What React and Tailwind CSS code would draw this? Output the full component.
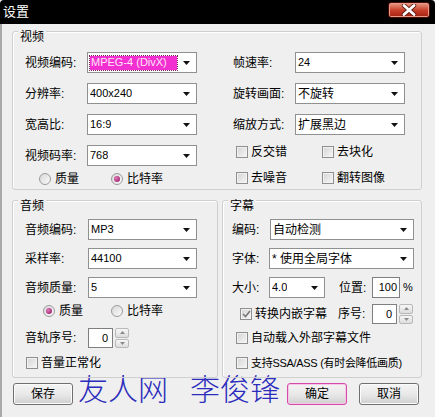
import React from 'react';

function DownArrow() {
  return (
    <svg width="7" height="4" viewBox="0 0 7 4" className="shrink-0">
      <path d="M0 0h7L3.5 4z" fill="#111" />
    </svg>
  );
}

function Combo({ value, className = '', textClass = 'text-[12px]', highlight = false }) {
  return (
    <div className={`flex h-[21px] shrink-0 items-center justify-between border border-[#8f9090] bg-white pl-[2px] pr-[6px] ${className}`}>
      {highlight ? (
        <span className="flex h-[14px] w-[87px] items-center bg-[#f22fd0] pl-[1px] text-[11px] text-[#ffe4f8] outline-1 outline-dotted outline-[#7a2060]">
          {value}
        </span>
      ) : (
        <span className={`truncate ${textClass}`}>{value}</span>
      )}
      <DownArrow />
    </div>
  );
}

function Check({ checked = false }) {
  return (
    <span className="flex h-[12px] w-[12px] shrink-0 items-center justify-center border border-[#8f8f8f] bg-linear-to-br from-[#d4d4d4] to-[#f7f7f7] shadow-[inset_0_0_0_1px_#f2f2f2]">
      {checked && (
        <svg width="9" height="8" viewBox="0 0 9 8">
          <path d="M1 4l2.5 2.5L8 1" stroke="#7c7c7c" strokeWidth="1.7" fill="none" />
        </svg>
      )}
    </span>
  );
}

function CheckItem({ label, checked, className = '', textClass = '' }) {
  return (
    <div className={`flex h-[14px] items-center gap-[3px] whitespace-nowrap ${className}`}>
      <Check checked={checked} />
      <span className={textClass}>{label}</span>
    </div>
  );
}

function Radio({ label, checked, className = '' }) {
  return (
    <div className={`flex h-[14px] items-center gap-[4px] ${className}`}>
      <span className="flex h-[12px] w-[12px] shrink-0 items-center justify-center rounded-full border border-[#9a9a9a] bg-linear-to-br from-[#d8d8d8] to-[#fbfbfb]">
        {checked && (
          <span className="h-[6px] w-[6px] rounded-full bg-[radial-gradient(circle_at_35%_35%,#e27ab8,#8c0f5e)]" />
        )}
      </span>
      <span>{label}</span>
    </div>
  );
}

function SpinBtn({ up }) {
  return (
    <span className="flex flex-1 items-center justify-center rounded-[2px] border border-[#b9b9b9] bg-linear-to-b from-[#f7f7f7] to-[#dcdcdc]">
      <svg width="5" height="3" viewBox="0 0 5 3">
        <path d={up ? 'M0 3h5L2.5 0z' : 'M0 0h5L2.5 3z'} fill="#8a8a8a" />
      </svg>
    </span>
  );
}

function Spin({ value }) {
  return (
    <div className="flex h-[20px] items-stretch gap-[2px]">
      <div className="flex w-[25px] items-center justify-end border border-[#7f7f7f] bg-white pr-[4px] text-[11px]">
        {value}
      </div>
      <div className="flex w-[14px] flex-col gap-[1px]">
        <SpinBtn up />
        <SpinBtn />
      </div>
    </div>
  );
}

function Group({ title, className = '', children }) {
  return (
    <div className={`relative shrink-0 rounded-[3px] border border-[#cfcfcf] shadow-[inset_1px_1px_0_#ffffff] ${className}`}>
      <span className="absolute -top-[2px] left-[5px] bg-[#efefef] px-[2px] leading-[14px]">{title}</span>
      {children}
    </div>
  );
}

function Btn({ children, focus = false }) {
  return (
    <button
      className={`h-[22px] w-[60px] shrink-0 rounded-[3px] border bg-linear-to-b from-[#f4f4f4] via-[#e9e9e9] to-[#d0d0d0] text-[12px] ${
        focus ? 'border-[#d64aa8] shadow-[inset_0_0_0_1px_#f6c6e6]' : 'border-[#707070] shadow-[inset_0_0_0_1px_#fbfbfb]'
      }`}
    >
      {children}
    </button>
  );
}

export default function App() {
  return (
    <div className="flex h-[417px] w-[435px] flex-col overflow-hidden bg-[#efefef] font-['Liberation_Sans','Noto_Sans_CJK_SC',sans-serif] text-[12px] text-black">
      {/* title bar */}
      <div className="flex h-[24px] shrink-0 items-start justify-between rounded-t-[4px] bg-black pl-[3px] pr-[5px]">
        <span className="mt-[4px] text-[13px] leading-[16px] text-white">设置</span>
        <div className="mt-[2px] flex h-[16px] w-[42px] items-center justify-center rounded-[3px] border border-[#4a0e08] bg-linear-to-b from-[#e59b88] via-[#c9412c] to-[#a3200f] shadow-[inset_0_0_0_1px_#eb9a8a]">
          <svg width="16" height="12" viewBox="0 0 16 12">
            <path d="M3 1.5l10 9M13 1.5l-10 9" stroke="#5a1a10" strokeWidth="4.4" strokeLinecap="round" />
            <path d="M3 1.5l10 9M13 1.5l-10 9" stroke="#ffffff" strokeWidth="2.8" strokeLinecap="round" />
          </svg>
        </div>
      </div>

      <div className="flex flex-1 flex-col border-l-2 border-[#a9a9a9] pl-[10px]">
        {/* video */}
        <Group title="视频" className="mt-[7px] h-[159px] w-[410px]">
          <div className="flex pl-[12px] pt-[20px]">
            <div className="flex w-[172px] flex-col">
              <div className="flex flex-col gap-[10px]">
                <div className="flex items-center">
                  <span className="w-[62px]">视频编码:</span>
                  <Combo value="MPEG-4 (DivX)" highlight className="w-[110px]" />
                </div>
                <div className="flex items-center">
                  <span className="w-[62px]">分辨率:</span>
                  <Combo value="400x240" textClass="text-[11px]" className="w-[110px]" />
                </div>
                <div className="flex items-center">
                  <span className="w-[62px]">宽高比:</span>
                  <Combo value="16:9" textClass="text-[11px]" className="w-[110px]" />
                </div>
                <div className="flex items-center">
                  <span className="w-[62px]">视频码率:</span>
                  <Combo value="768" textClass="text-[11px]" className="w-[110px]" />
                </div>
              </div>
              <div className="ml-[14px] mt-[6px] flex">
                <Radio label="质量" className="w-[72px]" />
                <Radio label="比特率" checked />
              </div>
            </div>

            <div className="ml-[36px] flex w-[172px] flex-col">
              <div className="flex flex-col gap-[10px]">
                <div className="flex items-center">
                  <span className="w-[62px]">帧速率:</span>
                  <Combo value="24" textClass="text-[11px]" className="w-[110px]" />
                </div>
                <div className="flex items-center">
                  <span className="w-[62px]">旋转画面:</span>
                  <Combo value="不旋转" className="w-[110px]" />
                </div>
                <div className="flex items-center">
                  <span className="w-[62px]">缩放方式:</span>
                  <Combo value="扩展黑边" className="w-[110px]" />
                </div>
              </div>
              <div className="ml-[3px] mt-[10px] flex">
                <CheckItem label="反交错" className="w-[86px]" />
                <CheckItem label="去块化" />
              </div>
              <div className="ml-[3px] mt-[12px] flex">
                <CheckItem label="去噪音" className="w-[86px]" />
                <CheckItem label="翻转图像" />
              </div>
            </div>
          </div>
        </Group>

        <div className="mt-[10px] flex gap-[4px]">
          {/* audio */}
          <Group title="音频" className="h-[178px] w-[206px]">
            <div className="flex flex-col pl-[12px] pt-[18px]">
              <div className="flex flex-col gap-[8px]">
                <div className="flex items-center">
                  <span className="w-[63px]">音频编码:</span>
                  <Combo value="MP3" textClass="text-[11px]" className="w-[109px]" />
                </div>
                <div className="flex items-center">
                  <span className="w-[63px]">采样率:</span>
                  <Combo value="44100" textClass="text-[11px]" className="w-[109px]" />
                </div>
                <div className="flex items-center">
                  <span className="w-[63px]">音频质量:</span>
                  <Combo value="5" textClass="text-[11px]" className="w-[109px]" />
                </div>
              </div>
              <div className="ml-[18px] mt-[6px] flex">
                <Radio label="质量" checked className="w-[68px]" />
                <Radio label="比特率" />
              </div>
              <div className="mt-[10px] flex items-center">
                <span className="w-[63px]">音轨序号:</span>
                <Spin value="0" />
              </div>
              <CheckItem label="音量正常化" className="ml-[1px] mt-[8px]" />
            </div>
          </Group>

          {/* subtitle */}
          <Group title="字幕" className="h-[178px] w-[200px]">
            <div className="flex flex-col pl-[9px] pt-[18px]">
              <div className="flex flex-col gap-[8px]">
                <div className="flex items-center">
                  <span className="w-[38px]">编码:</span>
                  <Combo value="自动检测" className="w-[144px]" />
                </div>
                <div className="flex items-center">
                  <span className="w-[37px]">字体:</span>
                  <Combo value="* 使用全局字体" className="w-[145px]" />
                </div>
                <div className="flex items-center">
                  <span className="w-[37px]">大小:</span>
                  <Combo value="4.0" textClass="text-[11px]" className="w-[56px]" />
                  <span className="ml-[14px] w-[33px]">位置:</span>
                  <div className="flex h-[21px] w-[28px] items-center justify-end border border-[#7f7f7f] bg-white pr-[2px] text-[11px]">
                    100
                  </div>
                  <span className="ml-[3px] text-[11px]">%</span>
                </div>
              </div>
              <div className="mt-[6px] flex h-[20px] items-center">
                <CheckItem label="转换内嵌字幕" checked className="ml-[8px] w-[98px]" />
                <span className="w-[34px]">序号:</span>
                <Spin value="0" />
              </div>
              <CheckItem label="自动载入外部字幕文件" className="ml-[4px] mt-[7px]" />
              <CheckItem
                label="支持SSA/ASS (有时会降低画质)"
                textClass="text-[11px] tracking-[-0.3px]"
                className="ml-[4px] mt-[11px]"
              />
            </div>
          </Group>
        </div>

        {/* buttons */}
        <div className="mt-[5px] flex items-start">
          <div className="ml-[1px]">
            <Btn>保存</Btn>
          </div>
          <div className="-mt-[8px] ml-[5px] flex w-[209px] shrink-0 whitespace-nowrap text-[30px] font-light leading-[30px] text-[#2c2cbc]">
            <span>友人网</span>
            <span className="ml-[22px]">李俊锋</span>
          </div>
          <Btn focus>确定</Btn>
          <div className="ml-[12px]">
            <Btn>取消</Btn>
          </div>
        </div>
      </div>
    </div>
  );
}
